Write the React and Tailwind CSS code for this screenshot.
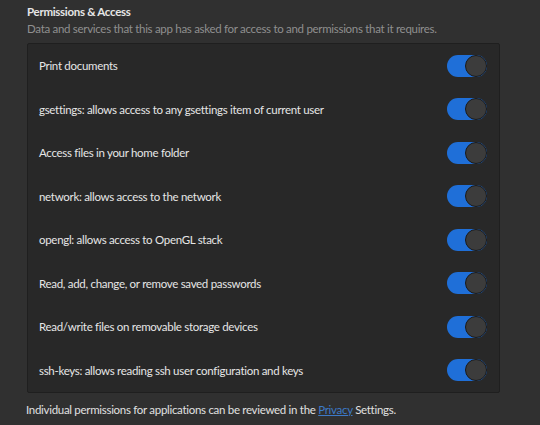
import React from 'react';

const permissions = [
  'Print documents',
  'gsettings: allows access to any gsettings item of current user',
  'Access files in your home folder',
  'network: allows access to the network',
  'opengl: allows access to OpenGL stack',
  'Read, add, change, or remove saved passwords',
  'Read/write files on removable storage devices',
  'ssh-keys: allows reading ssh user configuration and keys',
];

// ── Toggle switch (always on) ────────────────────────────────────────────────
const Toggle = () => (
  <div className="relative w-[40px] h-[22px] rounded-full bg-[#1f6fd8]">
    <div className="absolute right-0 top-0 w-[22px] h-[22px] rounded-full bg-[#3c3c3c] border border-[#1a1a1a]" />
  </div>
);

export default function App() {
  return (
    <div
      className="w-[540px] h-[425px] bg-[#303030] text-[#e6e6e6] px-[27px] pt-[4px] text-[11.5px] tracking-[-0.3px]"
      style={{ fontFamily: 'Lato, "Noto Sans", sans-serif' }}
    >
      <h2 className="font-bold leading-[16px]">Permissions &amp; Access</h2>
      <p className="text-[#8f8f8f] leading-[16px] mt-[1px]">
        Data and services that this app has asked for access to and permissions that it requires.
      </p>
      <div className="mt-[6px] w-[473px] bg-[#282828] border border-[#1f1f1f] rounded-[2px]">
        {permissions.map(label => (
          <div key={label} className="h-[43.5px] flex items-center justify-between pl-[11px] pr-[12px]">
            <span>{label}</span>
            <Toggle />
          </div>
        ))}
      </div>
      <p className="mt-[9px] leading-[16px] text-[#e0e0e0] -ml-[1px]">
        Individual permissions for applications can be reviewed in the{' '}
        <a className="text-[#3d7ac7] underline">Privacy</a> Settings.
      </p>
    </div>
  );
}
